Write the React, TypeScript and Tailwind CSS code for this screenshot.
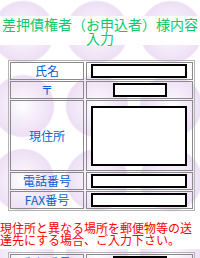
const jp = "font-['Noto_Sans_CJK_JP','Noto_Sans',sans-serif]"

type Row = { label: string; kind: 'wide' | 'short' | 'area' }

const rows: Row[] = [
  { label: '氏名', kind: 'wide' },
  { label: '〒', kind: 'short' },
  { label: '現住所', kind: 'area' },
  { label: '電話番号', kind: 'wide' },
  { label: 'FAX番号', kind: 'wide' },
]

function Field({ kind }: { kind: Row['kind'] }) {
  if (kind === 'area') {
    return <textarea className="block w-[96px] h-[60px] border-2 border-black bg-white resize-none outline-none" />
  }
  if (kind === 'short') {
    return <input className="block w-[54px] h-[14px] border-2 border-black bg-white outline-none" />
  }
  return <input className="block w-[96px] h-[14px] border-2 border-black bg-white outline-none" />
}

function FormTable({ items }: { items: Row[] }) {
  return (
    <div className="mx-[8px] w-[187px] border border-[#b4b4b4] p-px flex flex-col gap-px">
      {items.map((r) => (
        <div key={r.label} className="flex gap-[2px]">
          <div
            className={`w-[74px] ${r.kind === 'area' ? 'h-[71px]' : 'h-[18px]'} border border-[#8a8a8a] flex items-center justify-center text-[12px] leading-[12px] text-[#0a5fd0]`}
          >
            {r.label}
          </div>
          <div
            className={`flex-1 ${r.kind === 'area' ? 'h-[71px]' : 'h-[18px]'} border border-[#8a8a8a] flex items-center ${r.kind === 'short' ? 'justify-center' : 'pl-[4px]'}`}
          >
            <Field kind={r.kind} />
          </div>
        </div>
      ))}
    </div>
  )
}

export default function App() {
  return (
    <div
      className={`${jp} min-h-screen w-full overflow-hidden bg-white bg-[radial-gradient(circle_at_37px_37px,#ffffff_0px,#f7f0fb_12px,#eddff5_30px,#ffffff_32px)] bg-[length:74px_74px] bg-[position:-14px_-5px]`}
    >
      <div className="pt-[16px]">
        <h1 className="bg-white pt-px text-center text-[14px] leading-[14px] font-normal text-[#10c868]">
          差押債権者（お申込者）様内容入力
        </h1>
      </div>
      <div className="mt-[15px]">
        <FormTable items={rows} />
      </div>
      <p className="mt-[3px] bg-white pt-[8px] pb-[3px] text-[12px] leading-[12px] text-[#ff0000]">
        現住所と異なる場所を郵便物等の送達先にする場合、ご入力下さい。
      </p>
      <div className="mt-[3px]">
        <FormTable
          items={[
            { label: '郵便番号', kind: 'short' },
            { label: '住所', kind: 'area' },
          ]}
        />
      </div>
    </div>
  )
}
